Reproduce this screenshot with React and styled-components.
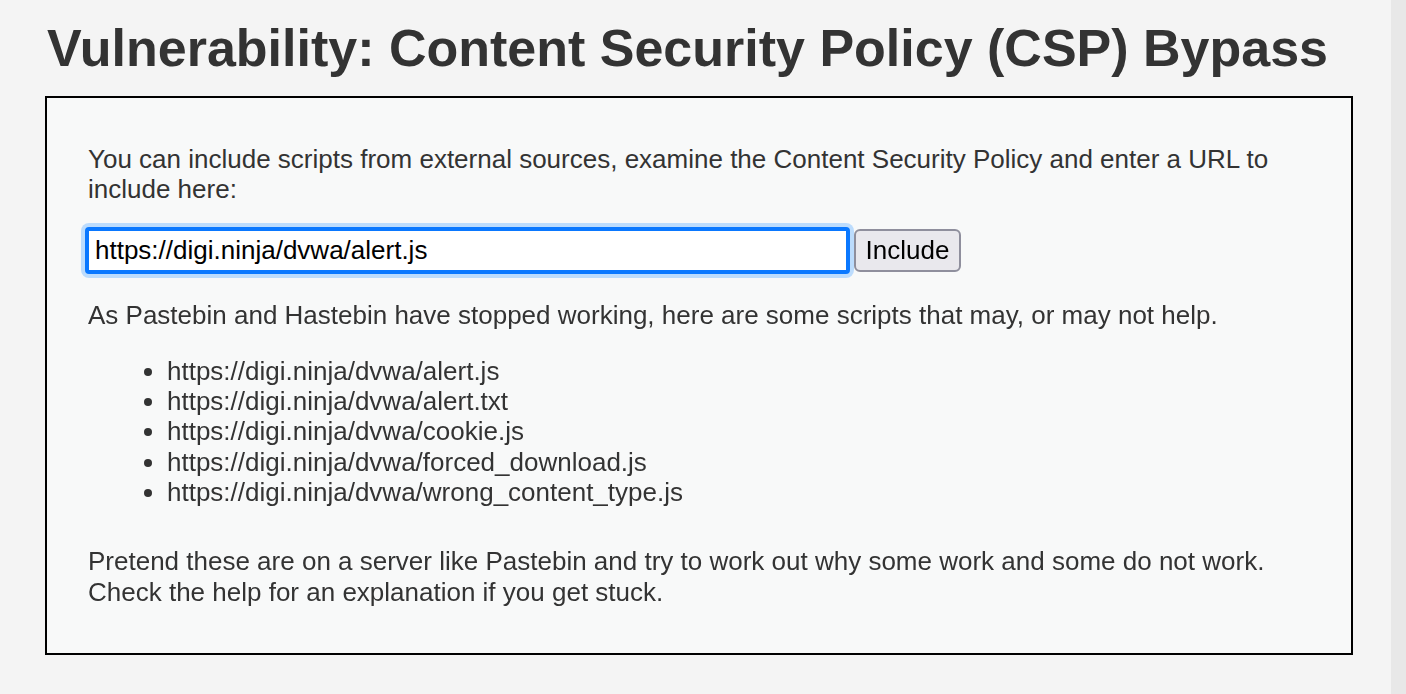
import React from 'react';
import styled, { createGlobalStyle } from 'styled-components';

const GlobalStyle = createGlobalStyle`
    html, body {
        margin:0;
        padding:0;
        height:100%;
        overflow:hidden;
        background:#f4f4f4;
    }
    body {
        font-family:"Liberation Sans", Arial, Helvetica, sans-serif;
        color:#333;
    }
`;

const Page = styled.div`
    display:flex;
    width:100vw;
    height:100vh;
`;

const Main = styled.div`
    flex:1;
    padding:0 38px 0 45px;
`;

const Scrollbar = styled.div`
    width:15px;
    background:#e8e8e8;
`;

const Title = styled.h1`
    font-size:52px;
    font-weight:bold;
    line-height:60px;
    color:#333;
    margin:18px 0 18px 2px;
`;

const Box = styled.div`
    border:2px solid #000;
    background:#f8f9f9;
    padding:20px 40px 20px 41px;
    font-size:26px;
    line-height:1.165;
`;

const Para = styled.p`
    margin:26px 0;
`;

/* negative top margin collapses with the paragraph above it */
const Form = styled.form`
    display:flex;
    align-items:center;
    margin:-4px 0 0 -3px;
    height:47px;
`;

const Input = styled.input`
    box-sizing:border-box;
    width:765px;
    height:47px;
    border:4px solid #0a78ff;
    border-radius:4px;
    outline:none;
    box-shadow:0 0 0 4px #bcdcfd;
    background:#fff;
    padding:0 6px;
    font-family:"Liberation Sans", Arial, sans-serif;
    font-size:26px;
    color:#000;
    caret-color:#000;
`;

const Button = styled.button`
    box-sizing:border-box;
    margin-left:4px;
    width:107px;
    height:43px;
    background:#e9e8ed;
    border:2px solid #8f8f9d;
    border-radius:6px;
    font-family:"Liberation Sans", Arial, sans-serif;
    font-size:26px;
    color:#000;
    padding:0;
`;

const List = styled.ul`
    margin:26px 0 39px;
    padding-left:79px;
`;

const Item = styled.li``;

const scripts = [
    'https://digi.ninja/dvwa/alert.js',
    'https://digi.ninja/dvwa/alert.txt',
    'https://digi.ninja/dvwa/cookie.js',
    'https://digi.ninja/dvwa/forced_download.js',
    'https://digi.ninja/dvwa/wrong_content_type.js',
];

const App = () => (
    <>
        <GlobalStyle />
        <Page>
            <Main>
                <Title>Vulnerability: Content Security Policy (CSP) Bypass</Title>
                <Box>
                    <Para>
                        You can include scripts from external sources, examine the Content Security Policy and enter a URL to include here:
                    </Para>
                    <Form onSubmit={e => e.preventDefault()}>
                        <Input type="text" defaultValue="https://digi.ninja/dvwa/alert.js" autoFocus />
                        <Button type="submit">Include</Button>
                    </Form>
                    <Para>
                        As Pastebin and Hastebin have stopped working, here are some scripts that may, or may not help.
                    </Para>
                    <List>
                        { scripts.map(s => <Item key={s}>{s}</Item>) }
                    </List>
                    <Para>
                        Pretend these are on a server like Pastebin and try to work out why some work and some do not work.<br />
                        Check the help for an explanation if you get stuck.
                    </Para>
                </Box>
            </Main>
            <Scrollbar />
        </Page>
    </>
);

export default App;
